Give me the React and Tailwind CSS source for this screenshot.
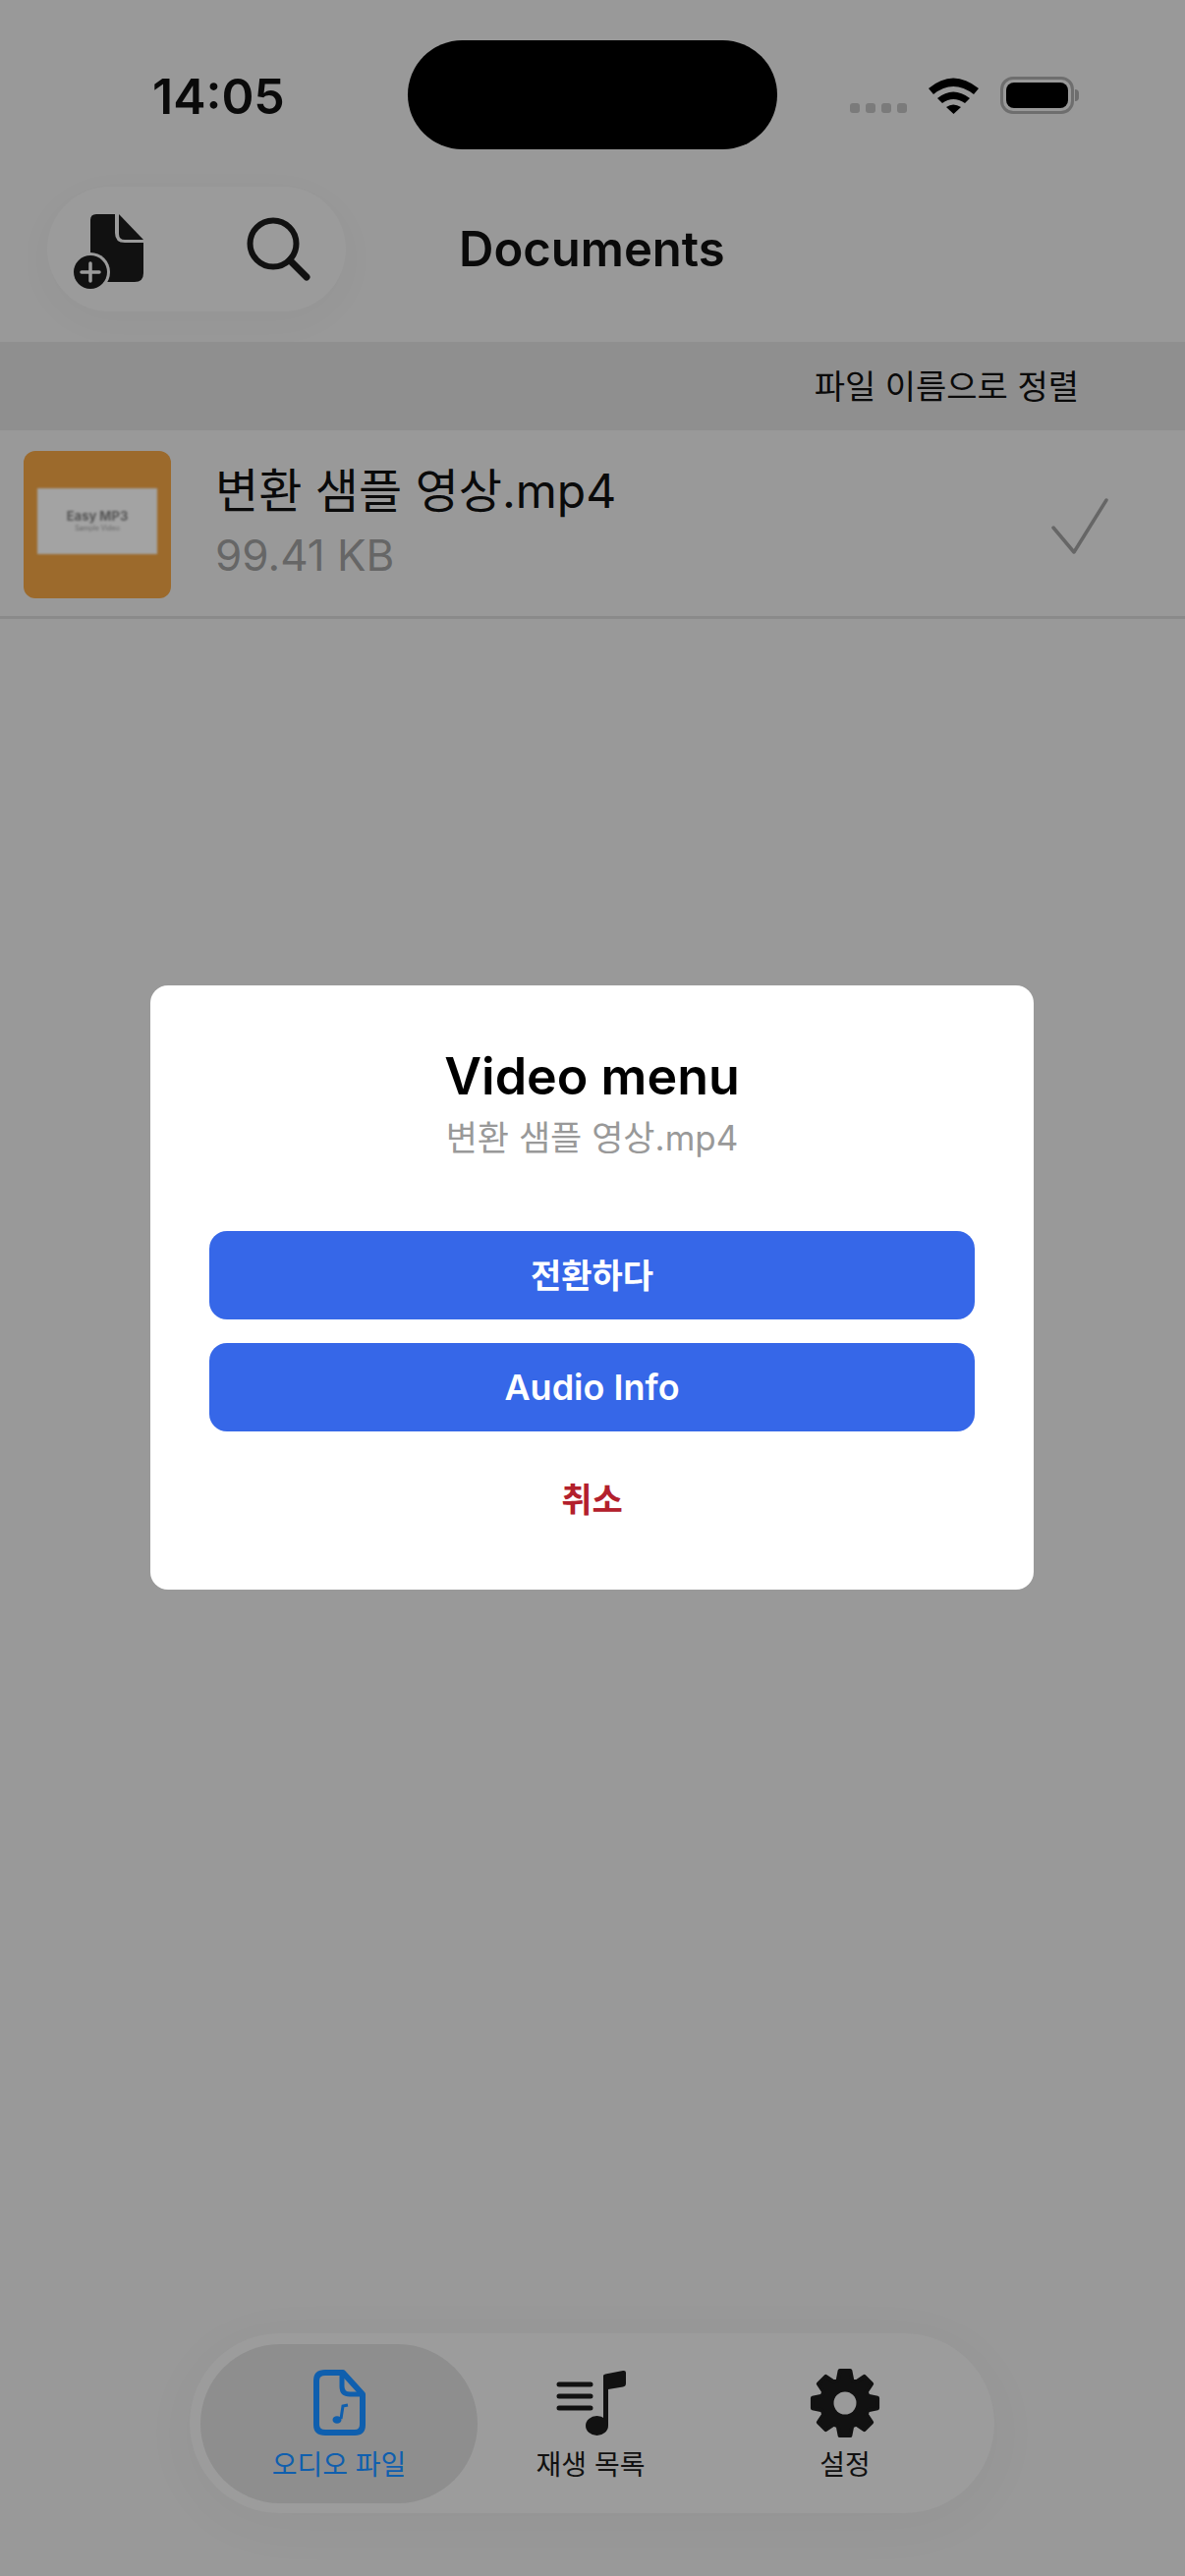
import React from 'react';

const FONT = 'font-[Inter,"Noto_Sans_CJK_KR",sans-serif]';

// 8 tooth gear outline around 36,36
const gearPoints = () => {
  const pts = [];
  for (let i = 0; i < 8; i++) {
    const a = (i * Math.PI) / 4 - Math.PI / 2;
    const at = (r, off) => `${(36 + r * Math.cos(a + off)).toFixed(2)},${(36 + r * Math.sin(a + off)).toFixed(2)}`;
    pts.push(at(24.5, -0.3), at(33.5, -0.16), at(33.5, 0.16), at(24.5, 0.3));
  }
  return pts.join(' ');
};

const AddFileIcon = () => (
  <svg width="71" height="76" viewBox="0 0 71 76" className="mt-[5px] shrink-0">
    <path d="M23 0H42V19Q42 29 52 29H71V60Q71 69 62 69H23Q17 69 17 62V6Q17 0 23 0Z" fill="#111" />
    <path d="M46 0L71 26H52Q46 26 46 20Z" fill="#111" />
    <circle cx="17" cy="59" r="20" fill="#9b9b9b" />
    <circle cx="17" cy="59" r="17" fill="#111" />
    <path d="M17 50V68M8 59H26" stroke="#9b9b9b" strokeWidth="3.5" strokeLinecap="round" />
  </svg>
);

const SearchIcon = () => (
  <svg width="66" height="66" viewBox="0 0 66 66" className="mt-[1px] shrink-0">
    <circle cx="27" cy="27" r="23.5" fill="none" stroke="#111" strokeWidth="6" />
    <path d="M44 44L61 61" stroke="#111" strokeWidth="7" strokeLinecap="round" />
  </svg>
);

const WifiIcon = () => (
  <svg width="51" height="37" viewBox="0 0 51 37">
    <path d="M0 11Q25-10 51 11L46 17Q25 1 5 17Z" fill="#000" />
    <path d="M9 21Q25 8 42 21L37 26Q25 18 14 26Z" fill="#000" />
    <path d="M18 30Q25 25 33 30L25.500 37Z" fill="#000" />
  </svg>
);

const Battery = () => (
  <div className="flex items-center">
    <div className="w-[75px] h-[38px] rounded-[13px] border-[3px] border-[#6e6e6e] p-[3px]">
      <div className="w-full h-full rounded-[8px] bg-black" />
    </div>
    <div className="w-[4px] h-[12px] rounded-r-full bg-[#6e6e6e] ml-[1px]" />
  </div>
);

const AudioFileIcon = () => (
  <svg width="53" height="67" viewBox="0 0 53 67">
    <path d="M12 3H30L50 25V56Q50 64 42 64H12Q3 64 3 56V11Q3 3 12 3Z" fill="none" stroke="#0f5fae" strokeWidth="6" strokeLinejoin="round" />
    <path d="M29 4V17Q29 25 37 25H49" fill="none" stroke="#0f5fae" strokeWidth="5" />
    <path d="M28 50L30 37L35 36" fill="none" stroke="#0f5fae" strokeWidth="3" />
    <ellipse cx="24" cy="51" rx="4.500" ry="3.800" fill="#0f5fae" />
  </svg>
);

const PlaylistIcon = () => (
  <svg width="71" height="68" viewBox="0 0 71 68">
    <path d="M3 15H35M3 27H35M3 39H35" stroke="#111" strokeWidth="5" strokeLinecap="round" />
    <path d="M48 6Q48 5 50 4.500L68 1Q71 .5 71 3V14Q71 17 68 17.500L53 20V57H48Z" fill="#111" />
    <ellipse cx="41.500" cy="57" rx="11.500" ry="10" fill="#111" />
  </svg>
);

const GearIcon = () => (
  <svg width="72" height="72" viewBox="0 0 72 72">
    <polygon points={gearPoints()} fill="#111" stroke="#111" strokeWidth="4" strokeLinejoin="round" />
    <circle cx="36" cy="36" r="11.500" fill="#9a9a9a" />
  </svg>
);

const Tab = ({ width, active, label, children }) => (
  <div className={`${width} h-[162px] shrink-0 flex flex-col items-center pt-[24px] ${active ? 'bg-[#8e8e8e] rounded-[81px] text-[#0f5fae]' : 'text-[#111]'}`}>
    <div className="h-[72px] flex items-center justify-center">{children}</div>
    <div className="mt-[9px] text-[28px] leading-[36px] whitespace-nowrap">{label}</div>
  </div>
);

export default function App() {
  return (
    <div className={`relative w-[1206px] h-[2622px] overflow-hidden bg-[#999999] flex flex-col ${FONT}`}>
      {/* status bar */}
      <div className="h-[190px] shrink-0 pt-[41px] pl-[155px] flex items-start">
        <div className="w-[260px] h-[111px] flex items-center text-[50px] font-semibold leading-none text-[#0a0a0a] pt-[2px]">14:05</div>
        <div className="w-[376px] h-[111px] rounded-full bg-black shrink-0" />
        <div className="ml-[74px] mt-[37px] flex items-end">
          <div className="flex gap-[6px] mb-[1px]">
            {[0, 1, 2, 3].map((i) => (
              <div key={i} className="w-[10px] h-[10px] rounded-[3px] bg-[#7b7b7b]" />
            ))}
          </div>
          <div className="ml-[22px]"><WifiIcon /></div>
          <div className="ml-[22px]"><Battery /></div>
        </div>
      </div>

      {/* top toolbar */}
      <div className="h-[158px] shrink-0 flex items-start">
        <div className="ml-[48px] w-[304px] h-[127px] rounded-[64px] bg-[#9b9b9b] shadow-[0_10px_40px_rgba(0,0,0,0.03)] flex items-center pl-[27px] gap-[105px]">
          <AddFileIcon />
          <SearchIcon />
        </div>
        <div className="ml-[115px] h-[127px] flex items-center text-[49px] font-semibold text-[#0a0a0a]">Documents</div>
      </div>

      {/* sort bar */}
      <div className="h-[90px] shrink-0 bg-[#8f8f8f] flex items-center justify-end pr-[108px] text-[34px] text-[#0a0a0a]">
        파일 이름으로 정렬
      </div>

      {/* file row */}
      <div className="h-[192px] shrink-0 border-b-[3px] border-[#8a8a8a] flex items-start pt-[21px] pl-[24px]">
        <div className="w-[150px] h-[150px] shrink-0 rounded-[12px] bg-[#9c6a2c] flex items-center justify-center">
          <div className="w-[122px] h-[67px] mt-[-8px] bg-[#a3a3a3] flex flex-col items-center justify-center blur-[0.8px]">
            <div className="text-[13px] leading-[16px] font-bold text-[#555]">Easy MP3</div>
            <div className="text-[7px] leading-[10px] text-[#666]">Sample Video</div>
          </div>
        </div>
        <div className="ml-[45px] flex-1">
          <div className="text-[48px] leading-[60px] mt-[11px] text-[#0a0a0a] whitespace-nowrap">변환 샘플 영상.mp4</div>
          <div className="text-[44px] leading-[52px] mt-[9px] text-[#666666]">99.41 KB</div>
        </div>
        <svg width="60" height="60" viewBox="0 0 60 60" className="mt-[47px] mr-[76px] shrink-0">
          <path d="M2 31L23 56L56 3" fill="none" stroke="#666" strokeWidth="3.500" strokeLinecap="round" strokeLinejoin="round" />
        </svg>
      </div>

      {/* bottom tabs */}
      <div className="mt-auto mb-[64px] ml-[193px] w-[819px] h-[183px] rounded-[92px] bg-[#9c9c9c] shadow-[0_10px_60px_rgba(0,0,0,0.04)] flex items-center pl-[11px]">
        <Tab width="w-[282px]" active label="오디오 파일"><AudioFileIcon /></Tab>
        <Tab width="w-[230px]" label="재생 목록"><PlaylistIcon /></Tab>
        <Tab width="w-[288px]" label="설정"><GearIcon /></Tab>
      </div>

      {/* dialog */}
      <div className="absolute left-[153px] top-[1003px] w-[899px] h-[615px] rounded-[18px] bg-white flex flex-col items-center px-[60px] pt-[60px]">
        <div className="text-[52px] leading-[66px] font-semibold text-black">Video menu</div>
        <div className="text-[35px] leading-[44px] mt-[7px] text-[#999999]">변환 샘플 영상.mp4</div>
        <button className="mt-[73px] w-full h-[90px] rounded-[18px] bg-[#3667e8] text-white text-[34px] font-semibold">전환하다</button>
        <button className="mt-[24px] w-full h-[90px] rounded-[18px] bg-[#3667e8] text-white text-[36px] font-semibold">Audio Info</button>
        <button className="mt-[24px] w-full h-[90px] text-[#b3202c] text-[34px] font-semibold">취소</button>
      </div>
    </div>
  );
}
